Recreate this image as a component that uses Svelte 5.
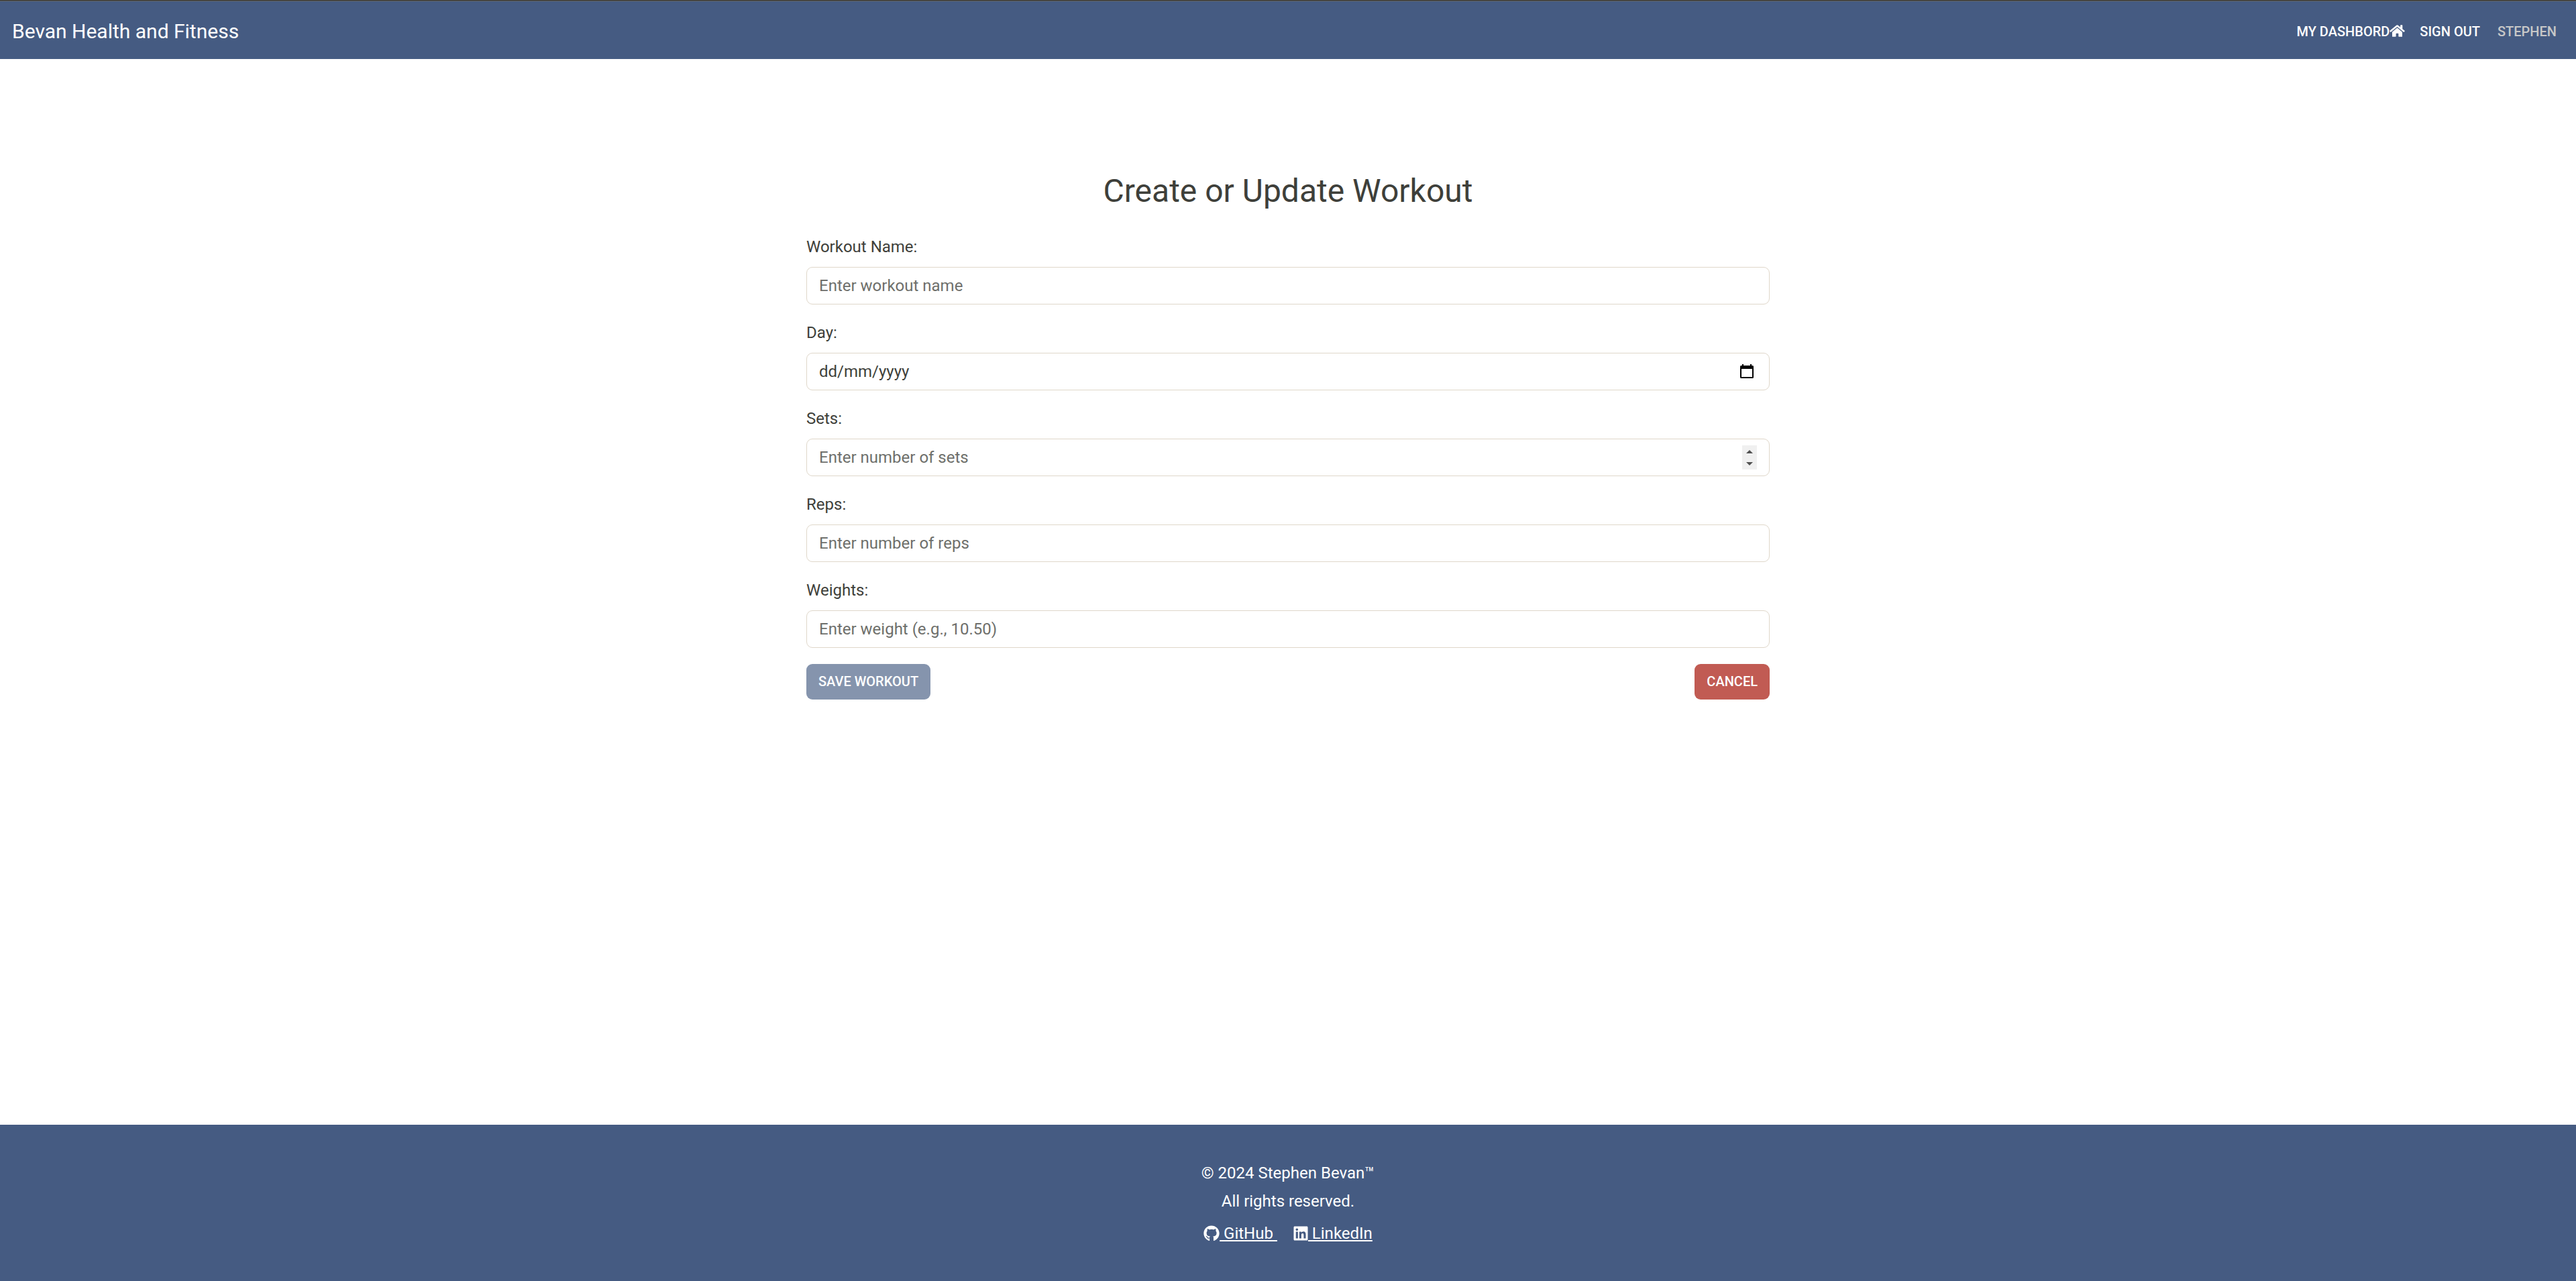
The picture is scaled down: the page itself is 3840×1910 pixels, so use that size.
<script>
  const fields = [
    { id: 'name', label: 'Workout Name:', placeholder: 'Enter workout name' },
    { id: 'day', label: 'Day:', placeholder: 'dd/mm/yyyy', kind: 'date' },
    { id: 'sets', label: 'Sets:', placeholder: 'Enter number of sets', kind: 'number' },
    { id: 'reps', label: 'Reps:', placeholder: 'Enter number of reps' },
    { id: 'weights', label: 'Weights:', placeholder: 'Enter weight (e.g., 10.50)' }
  ];

  let sets = $state(null);

  function step(amount) {
    sets = Math.max(0, (sets ?? 0) + amount);
  }
</script>

<div class="page">
  <header class="navbar">
    <a class="brand" href="#home">Bevan Health and Fitness</a>
    <nav class="links">
      <a href="#dashboard">MY DASHBORD<svg class="house" viewBox="0 0 576 512" aria-hidden="true"><path fill="currentColor" d="M280.4 148.300L96 300.100V464a16 16 0 0 0 16 16l112.100-.3a16 16 0 0 0 15.900-16V368a16 16 0 0 1 16-16h64a16 16 0 0 1 16 16v95.600a16 16 0 0 0 16 16.100L464 480a16 16 0 0 0 16-16V300L295.700 148.300a12.200 12.200 0 0 0-15.300 0zM571.600 251.500L488 182.600V44.100a12 12 0 0 0-12-12h-56a12 12 0 0 0-12 12v72.600L318.500 43a48 48 0 0 0-61 0L4.300 251.500a12 12 0 0 0-1.600 16.900l25.500 31A12 12 0 0 0 45.200 301l235.200-193.700a12.200 12.200 0 0 1 15.300 0L530.900 301a12 12 0 0 0 16.900-1.600l25.500-31a12 12 0 0 0-1.700-16.900z"/></svg></a>
      <a href="#signout">SIGN OUT</a>
      <span class="user">STEPHEN</span>
    </nav>
  </header>

  <main>
    <h1>Create or Update Workout</h1>
    <form onsubmit={(e) => e.preventDefault()}>
      {#each fields as field (field.id)}
        <div class="field">
          <label for={field.id}>{field.label}</label>
          <div class="control">
            {#if field.kind === 'number'}
              <input id={field.id} type="number" min="0" placeholder={field.placeholder} bind:value={sets} />
              <span class="spinner">
                <button type="button" aria-label="More sets" onclick={() => step(1)}>
                  <svg width="10" height="5" viewBox="0 0 10 5"><path d="M0 5L5 0l5 5z" fill="#505050" /></svg>
                </button>
                <button type="button" aria-label="Fewer sets" onclick={() => step(-1)}>
                  <svg width="10" height="5" viewBox="0 0 10 5"><path d="M0 0h10L5 5z" fill="#505050" /></svg>
                </button>
              </span>
            {:else if field.kind === 'date'}
              <input id={field.id} class="date" type="text" inputmode="numeric" placeholder={field.placeholder} />
              <button class="calendar" type="button" aria-label="Pick a day">
                <svg width="20" height="21" viewBox="0 0 20 21"><path fill="#000" fill-rule="evenodd" d="M3 0h2v2h10V0h2v2h1.500A1.500 1.500 0 0 1 20 3.500v16a1.500 1.500 0 0 1-1.500 1.500h-17A1.500 1.500 0 0 1 0 19.500v-16A1.500 1.500 0 0 1 1.500 2H3zM2 7v12h16V7z" /></svg>
              </button>
            {:else}
              <input id={field.id} type="text" placeholder={field.placeholder} />
            {/if}
          </div>
        </div>
      {/each}
      <div class="actions">
        <button class="btn save" type="submit" disabled>SAVE WORKOUT</button>
        <a class="btn cancel" href="#cancel">CANCEL</a>
      </div>
    </form>
  </main>

  <footer>
    <p>© 2024 Stephen Bevan™</p>
    <p>All rights reserved.</p>
    <div class="social">
      <a href="#github"><svg class="github" viewBox="0 0 496 512" aria-hidden="true"><path fill="currentColor" d="M165.900 397.400c0 2-2.300 3.600-5.200 3.600-3.300.3-5.600-1.300-5.600-3.600 0-2 2.300-3.600 5.200-3.600 3-.3 5.600 1.300 5.600 3.600zm-31.100-4.500c-.7 2 1.300 4.300 4.300 4.900 2.600 1 5.600 0 6.200-2s-1.300-4.300-4.300-5.200c-2.600-.7-5.500.3-6.200 2.300zm44.200-1.700c-2.900.7-4.900 2.600-4.600 4.900.3 2 2.900 3.300 5.900 2.600 2.900-.7 4.900-2.600 4.600-4.600-.3-1.900-3-3.200-5.900-2.900zM244.800 8C106.100 8 0 113.300 0 252c0 110.900 69.800 205.800 169.500 239.200 12.800 2.300 17.300-5.600 17.300-12.100 0-6.200-.3-40.400-.3-61.400 0 0-70 15-84.700-29.800 0 0-11.400-29.100-27.800-36.600 0 0-22.900-15.700 1.600-15.400 0 0 24.900 2 38.600 25.800 21.900 38.600 58.600 27.500 72.900 20.900 2.300-16 8.800-27.100 16-33.700-55.900-6.200-112.300-14.300-112.300-110.500 0-27.500 7.600-41.300 23.600-58.900-2.600-6.500-11.100-33.300 2.600-67.900 20.900-6.500 69 27 69 27 20-5.600 41.500-8.500 62.800-8.500s42.800 2.900 62.800 8.500c0 0 48.100-33.600 69-27 13.700 34.700 5.200 61.400 2.600 67.900 16 17.700 25.800 31.500 25.800 58.900 0 96.500-58.900 104.200-114.800 110.500 9.200 7.900 17 22.900 17 46.400 0 33.700-.3 75.400-.3 83.600 0 6.500 4.600 14.400 17.300 12.100C428.200 457.800 496 362.900 496 252 496 113.300 383.500 8 244.800 8z"/></svg><span>&nbsp;GitHub&nbsp;</span></a>
      <a href="#linkedin"><svg class="linkedin" viewBox="0 0 448 512" aria-hidden="true"><path fill="currentColor" d="M416 32H31.900C14.300 32 0 46.500 0 64.300v383.400C0 465.500 14.300 480 31.900 480H416c17.600 0 32-14.500 32-32.300V64.300c0-17.800-14.400-32.300-32-32.300zM135.400 416H69V202.200h66.500V416zm-33.200-243c-21.300 0-38.500-17.300-38.500-38.500S80.900 96 102.200 96c21.200 0 38.500 17.300 38.500 38.500 0 21.300-17.200 38.500-38.500 38.500zm282.100 243h-66.400V312c0-24.800-.5-56.700-34.500-56.700-34.600 0-39.900 27-39.900 54.900V416h-66.400V202.200h63.700v29.200h.9c8.900-16.800 30.600-34.500 62.900-34.500 67.200 0 79.700 44.300 79.700 101.900V416z"/></svg><span>&nbsp;LinkedIn</span></a>
    </div>
  </footer>
</div>

<style>
  :global(body) {
    margin: 0;
    background: #fff;
  }

  .page {
    display: flex;
    flex-direction: column;
    min-height: 100vh;
    font: 400 24px/36px Roboto, "Open Sans", sans-serif;
    color: #3e3f3a;
  }

  .page * {
    box-sizing: border-box;
  }

  .navbar {
    display: flex;
    align-items: center;
    justify-content: space-between;
    padding: 22px 29px 18px 18px;
    border-top: 1px solid #323330;
    box-shadow: inset 0 1px #62625e;
    background: #455b82;
  }

  .navbar a,
  footer {
    color: #fff;
  }

  .brand {
    font-size: 30px;
    line-height: 47px;
    text-decoration: none;
  }

  .links {
    display: flex;
    align-items: center;
    font-size: 20px;
    font-weight: 500;
    line-height: 32px;
  }

  .links a {
    margin-right: 22px;
    text-decoration: none;
  }

  .links .user {
    margin-left: 4px;
    color: #c8c8c8;
  }

  .house {
    width: 23px;
    height: 20px;
    vertical-align: -2px;
  }

  main {
    flex: 1;
    width: 100%;
    max-width: 1472px;
    margin: 0 auto;
    padding: 168px 18px 36px;
  }

  h1 {
    margin: 0 0 36px;
    font-size: 48px;
    font-weight: 400;
    line-height: 58px;
    text-align: center;
  }

  .field {
    margin-bottom: 24px;
  }

  label {
    display: block;
    margin-bottom: 12px;
  }

  .control {
    position: relative;
  }

  input {
    display: block;
    width: 100%;
    height: 56px;
    padding: 9px 18px;
    border: 1px solid #dfd7ca;
    border-radius: 9px;
    background: #fff;
    color: #3e3f3a;
    font: inherit;
    appearance: textfield;
  }

  input::placeholder {
    color: #6e6f6b;
    opacity: 1;
  }

  input.date::placeholder {
    color: #3e3f3a;
  }

  input[type="number"]::-webkit-inner-spin-button {
    display: none;
  }

  .control button {
    display: flex;
    align-items: center;
    justify-content: center;
    padding: 0;
    border: 0;
    background: none;
  }

  .control .calendar {
    position: absolute;
    top: 15px;
    right: 22px;
    width: 24px;
    height: 25px;
  }

  .spinner {
    position: absolute;
    top: 10px;
    right: 19px;
    display: grid;
    grid-template-rows: 1fr 1fr;
    width: 22px;
    height: 36px;
    background: #f0f0f0;
  }

  .actions {
    display: flex;
    justify-content: space-between;
  }

  .btn {
    padding: 10px 18px;
    border: 0;
    border-radius: 9px;
    color: #fff;
    font: 500 20px/33px Roboto, "Open Sans", sans-serif;
    text-decoration: none;
  }

  .save {
    background: #455b82;
    opacity: 0.65;
  }

  .cancel {
    background: #c15b53;
  }

  footer {
    padding: 54px 18px 53px;
    background: #455b82;
    text-align: center;
  }

  footer p {
    margin: 0 0 6px;
  }

  .social {
    display: flex;
    justify-content: center;
    gap: 24px;
    padding-top: 6px;
  }

  .social a {
    display: flex;
    align-items: center;
    color: #fff;
    text-decoration: none;
  }

  .social span {
    text-decoration: underline;
  }

  .github {
    width: 24px;
    height: 24px;
  }

  .linkedin {
    width: 22px;
    height: 24px;
  }
</style>
